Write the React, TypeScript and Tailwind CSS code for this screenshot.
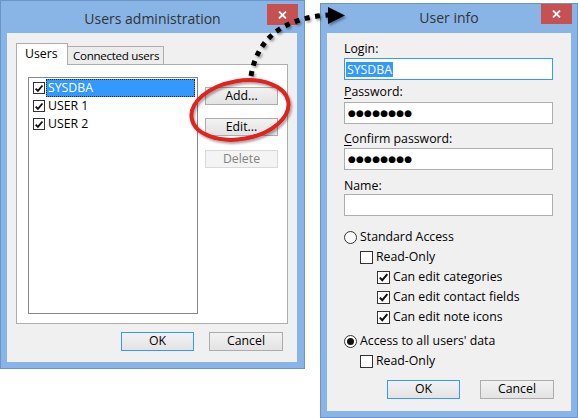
import React from "react";

const CheckMark = () => (
  <svg width="11" height="11" viewBox="0 0 11 11" className="block">
    <path d="M1.8 5.6 L4.3 8.2 L9.3 2.2" stroke="#111" strokeWidth="2" fill="none" />
  </svg>
);

const Box = ({ checked = true, small = false }: { checked?: boolean; small?: boolean }) => (
  <span
    className={
      small
        ? "flex items-center justify-center w-[12px] h-[12px] border border-[#333] bg-white shrink-0"
        : "flex items-center justify-center w-[13px] h-[13px] border border-[#333] bg-white shrink-0"
    }
  >
    {checked && <CheckMark />}
  </span>
);

const Radio = ({ on = false }: { on?: boolean }) => (
  <span className="flex items-center justify-center w-[13px] h-[13px] rounded-full border border-[#333] bg-white shrink-0">
    {on && <span className="w-[7px] h-[7px] rounded-full bg-[#111]" />}
  </span>
);

const CloseBtn = ({ cls }: { cls: string }) => (
  <div className={cls}>
    <svg width="9" height="8" viewBox="0 0 9 8">
      <path d="M1 0.5 L8 7.5 M8 0.5 L1 7.5" stroke="#fff" strokeWidth="1.8" />
    </svg>
  </div>
);

const Row = ({ indent, children }: { indent: string; children: React.ReactNode }) => (
  <div className={"h-[20px] flex items-center gap-[3px] whitespace-nowrap " + indent}>{children}</div>
);

const Label = ({ children, cls }: { children: React.ReactNode; cls: string }) => (
  <div className={"h-[16px] leading-[16px] " + cls}>{children}</div>
);

const Dots = () => (
  <div className="h-[22px] w-[209px] border border-[#abadb3] bg-white flex items-center pl-[3px]">
    <span className="font-['DejaVu_Sans'] text-[9px] leading-none tracking-[0.2px] text-black">●●●●●●●●</span>
  </div>
);

export default function App() {
  return (
    <div className="relative w-[578px] h-[418px] bg-white overflow-hidden font-['Open_Sans'] text-[12.3px] text-black">
      {/* Left window */}
      <div className="absolute left-0 top-0 w-[305px] h-[369px] border border-[#6b95c9] bg-[#89b4e6] flex flex-col">
        <div className="relative h-[32px] shrink-0 flex justify-center">
          <span className="mt-[8px] text-[14px] leading-[20px] text-[#333]">Users administration</span>
          <CloseBtn cls="absolute right-[6px] top-[3px] w-[31px] h-[21px] bg-[#c75050] flex items-center justify-center" />
        </div>
        <div className="ml-[6px] mr-[7px] mb-[6px] flex-1 bg-[#f0f0f0] pl-[9px] pt-[10px] flex flex-col">
          <div className="flex items-end h-[21px]">
            <div className="relative z-10 h-[22px] w-[52px] mb-[-1px] border border-b-0 border-[#adadad] bg-white pl-[8px] pt-[2px] leading-[16px]">
              Users
            </div>
            <div className="h-[18px] w-[96px] border border-l-0 border-b-0 border-[#adadad] bg-[#ececec] pl-[5px] pt-[1px] leading-[16px] whitespace-nowrap text-[11.6px] tracking-[-0.3px]">
              Connected users
            </div>
          </div>
          <div className="w-[272px] h-[260px] border border-[#adadad] bg-white flex">
            <div className="ml-[11px] mt-[12px] w-[170px] h-[237px] border border-[#828790] bg-white pl-[4px] pt-[1px] flex flex-col">
              <div className="h-[18px] flex items-center">
                <Box small />
                <div className="ml-[1px] w-[149px] h-[18px] bg-[#3399ff] border border-dotted border-[#2a2a2a] text-white pl-[1px] leading-[16px]">
                  SYSDBA
                </div>
              </div>
              <div className="h-[18px] flex items-center">
                <Box small />
                <div className="ml-[2px] pl-[1px] leading-[16px]">USER 1</div>
              </div>
              <div className="h-[18px] flex items-center">
                <Box small />
                <div className="ml-[2px] pl-[1px] leading-[16px]">USER 2</div>
              </div>
            </div>
            <div className="ml-[7px] pt-[22px] flex flex-col">
              <div className="w-[73px] h-[18px] border border-[#acacac] bg-linear-to-b from-[#f2f2f2] to-[#e3e3e3] flex items-center justify-center">
                Add...
              </div>
              <div className="mt-[13px] w-[73px] h-[18px] border border-[#acacac] bg-linear-to-b from-[#f2f2f2] to-[#e3e3e3] flex items-center justify-center">
                Edit...
              </div>
              <div className="mt-[14px] w-[73px] h-[18px] border border-[#d9d9d9] bg-[#f4f4f4] text-[#838383] flex items-center justify-center">
                Delete
              </div>
            </div>
          </div>
          <div className="mt-[8px] flex justify-end pr-[14px] gap-[15px]">
            <div className="w-[73px] h-[19px] border border-[#3399ff] bg-linear-to-b from-[#f2f2f2] to-[#e3e3e3] flex items-center justify-center">
              OK
            </div>
            <div className="w-[74px] h-[19px] border border-[#acacac] bg-linear-to-b from-[#f2f2f2] to-[#e3e3e3] flex items-center justify-center">
              Cancel
            </div>
          </div>
        </div>
      </div>

      {/* Right window */}
      <div className="absolute left-[320px] top-[3px] w-[258px] h-[415px] border border-[#6b95c9] bg-[#89b4e6] flex flex-col">
        <div className="relative h-[29px] shrink-0 flex justify-center">
          <span className="mt-[4px] text-[14px] leading-[20px] text-[#333]">User info</span>
          <CloseBtn cls="absolute right-[5px] top-0 w-[31px] h-[20px] bg-[#c75050] flex items-center justify-center" />
        </div>
        <div className="ml-[6px] mr-[6px] mb-[6px] flex-1 bg-[#f0f0f0] pl-[17px] pt-[8px] flex flex-col">
          <Label cls="">Login:</Label>
          <div className="mt-[1px] h-[22px] w-[209px] border border-[#3399ff] bg-white flex items-center pl-[1px]">
            <span className="bg-[#3399ff] text-white h-[15px] leading-[15px] px-[1px]">SYSDBA</span>
          </div>
          <Label cls="mt-[4px]">
            <span className="underline underline-offset-2">P</span>assword:
          </Label>
          <div className="mt-[2px]">
            <Dots />
          </div>
          <Label cls="mt-[7px]">
            <span className="underline underline-offset-2">C</span>onfirm password:
          </Label>
          <div className="mt-[1px]">
            <Dots />
          </div>
          <Label cls="mt-[8px]">Name:</Label>
          <div className="h-[22px] w-[209px] border border-[#abadb3] bg-white" />
          <div className="mt-[11px] flex flex-col">
            <Row indent="">
              <Radio />
              <span>Standard Access</span>
            </Row>
            <Row indent="ml-[16px]">
              <Box checked={false} />
              <span>Read-Only</span>
            </Row>
            <Row indent="ml-[33px]">
              <Box />
              <span>Can edit categories</span>
            </Row>
            <Row indent="ml-[33px]">
              <Box />
              <span>Can edit contact fields</span>
            </Row>
            <Row indent="ml-[33px]">
              <Box />
              <span>Can edit note icons</span>
            </Row>
            <div className="mt-[4px]">
              <Row indent="">
                <Radio on />
                <span>Access to all users' data</span>
              </Row>
            </div>
            <Row indent="ml-[16px]">
              <Box checked={false} />
              <span>Read-Only</span>
            </Row>
          </div>
          <div className="mt-[9px] flex justify-end pr-[17px] gap-[20px]">
            <div className="w-[73px] h-[19px] border border-[#3399ff] bg-linear-to-b from-[#f2f2f2] to-[#e3e3e3] flex items-center justify-center">
              OK
            </div>
            <div className="w-[74px] h-[19px] border border-[#acacac] bg-linear-to-b from-[#f2f2f2] to-[#e3e3e3] flex items-center justify-center">
              Cancel
            </div>
          </div>
        </div>
      </div>

      {/* Annotation overlay */}
      <svg className="absolute left-0 top-0 pointer-events-none" width="578" height="418" viewBox="0 0 578 418">
        <defs>
          <filter id="sh" x="-20%" y="-20%" width="140%" height="140%">
            <feDropShadow dx="1.5" dy="2" stdDeviation="1.2" floodColor="#000" floodOpacity="0.35" />
          </filter>
        </defs>
        <g filter="url(#sh)">
          <ellipse cx="240" cy="110" rx="49" ry="29" transform="rotate(-10 240 110)" fill="none" stroke="#e2201c" strokeWidth="4" />
          <path d="M251 76 Q260 20 328 15" fill="none" stroke="#000" strokeWidth="5" strokeDasharray="5 5.5" />
          <path d="M328 7 L345 15.5 L328 24 Z" fill="#000" />
        </g>
      </svg>
    </div>
  );
}
